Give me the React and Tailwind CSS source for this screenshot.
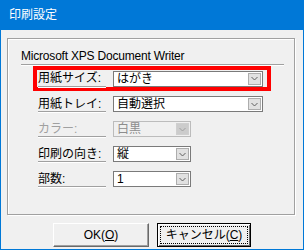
const font = { fontFamily: '"Liberation Sans", "Noto Sans CJK JP", sans-serif' }

function Chevron({ disabled }) {
    return (
        <svg width="7" height="5" viewBox="0 0 7 5">
            <polyline points="0.5,1 3.5,4 6.5,1" fill="none" stroke={disabled ? '#a0a0a0' : '#606060'} strokeWidth="1" />
        </svg>
    )
}

function Combo({ value, width, disabled }) {
    return (
        <div
            className={`flex h-[16px] items-stretch border ${disabled ? 'border-[#bcbcbc] bg-[#f0f0f0] text-[#8d8d8d]' : 'border-[#7a7a7a] bg-white text-black'}`}
            style={{ width }}
        >
            <div className="flex flex-1 items-center pl-[3px] text-[12px] leading-none">{value}</div>
            <div className={`m-[1px] flex w-[13px] items-center justify-center border ${disabled ? 'border-[#cfcfcf] bg-[#cccccc]' : 'border-[#adadad] bg-[#e1e1e1]'}`}>
                <Chevron disabled={disabled} />
            </div>
        </div>
    )
}

function Row({ label, value, width, disabled }) {
    return (
        <div className="flex h-[16px] items-stretch gap-[7px]">
            <div className={`flex w-[68px] items-center border-b border-[#a0a0a0] text-[12px] leading-none shadow-[0_1px_0_#fff] ${disabled ? 'text-[#a0a0a0]' : 'text-black'}`}>
                {label}
            </div>
            <Combo value={value} width={width} disabled={disabled} />
        </div>
    )
}

export default function App() {
    return (
        <div className="flex h-[250px] w-[304px] flex-col bg-[#0078d7] px-[1px] pb-[1px]" style={font}>
            <div className="flex h-[30px] items-center pl-[8px] text-[12px] text-white">印刷設定</div>
            <div className="flex flex-1 flex-col bg-[#f0f0f0] pl-[6px] pt-[8px]">
                <div className="h-[177px] w-[288px] border border-[#a0a0a0] shadow-[1px_1px_0_#fff,inset_1px_1px_0_#fff]">
                    <div className="ml-[13px] mt-[11px] h-[13px] text-[12px] leading-[13px] tracking-[-0.2px] text-black">Microsoft XPS Document Writer</div>
                    <div className="ml-[13px] mt-[1px] h-[2px] w-[263px] border-t border-[#a0a0a0] border-b border-b-white" />
                    <div className="ml-[25px] flex h-[25px] w-[238px] items-center border-4 border-[#ff0000] pl-[1px]">
                        <Row label="用紙サイズ:" value="はがき" width={150} />
                    </div>
                    <div className="ml-[30px] mt-[5px] flex flex-col gap-[9px]">
                        <Row label="用紙トレイ:" value="自動選択" width={150} />
                        <Row label="カラー:" value="白黒" width={78} disabled />
                        <Row label="印刷の向き:" value="縦" width={78} />
                        <Row label="部数:" value="1" width={78} />
                    </div>
                </div>
                <div className="ml-[46px] mt-[8px] flex gap-[8px]">
                    <button className="flex h-[24px] w-[96px] items-center justify-center border border-[#fff] border-b-[#696969] border-r-[#696969] bg-[#f0f0f0] text-[12px] leading-none text-black shadow-[inset_-1px_-1px_0_#a0a0a0]">
                        OK(<span className="underline">O</span>)
                    </button>
                    <button className="flex h-[24px] w-[94px] items-center justify-center border border-black bg-[#f0f0f0] p-[2px] text-[12px] leading-none text-black shadow-[inset_1px_1px_0_#fff,inset_-1px_-1px_0_#696969]">
                        <span className="flex h-full w-full items-center justify-center border border-dotted border-black">
                            キャンセル(<span className="underline">C</span>)
                        </span>
                    </button>
                </div>
            </div>
        </div>
    )
}
